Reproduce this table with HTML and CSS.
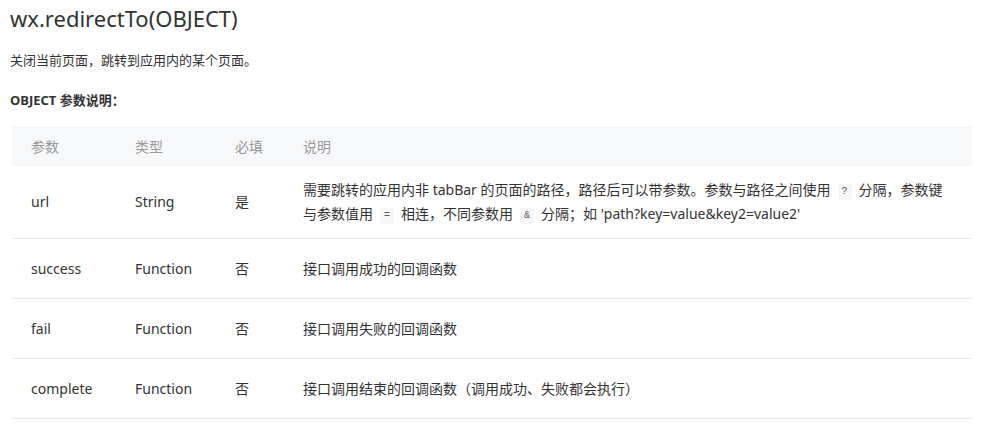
FILE: index.html
```html
<!DOCTYPE html>
<html lang="zh-CN">
<head>
    <meta charset="UTF-8">
    <title>wx.redirectTo</title>
    <link rel="stylesheet" href="styles.css">
</head>
<body>
    <h1 class="api-title">wx.redirectTo(OBJECT)</h1>
    <p class="api-desc">关闭当前页面，跳转到应用内的某个页面。</p>
    <p class="api-sub"><strong>OBJECT 参数说明：</strong></p>

    <table class="param-table">
        <thead>
            <tr>
                <th class="col-name">参数</th>
                <th class="col-type">类型</th>
                <th class="col-req">必填</th>
                <th>说明</th>
            </tr>
        </thead>
        <tbody>
            <tr>
                <td>url</td>
                <td>String</td>
                <td>是</td>
                <td>需要跳转的应用内非 tabBar 的页面的路径，路径后可以带参数。参数与路径之间使用<code>?</code>分隔，参数键<br>与参数值用<code>=</code>相连，不同参数用<code>&amp;</code>分隔；如 'path?key=value&amp;key2=value2'</td>
            </tr>
            <tr>
                <td>success</td>
                <td>Function</td>
                <td>否</td>
                <td>接口调用成功的回调函数</td>
            </tr>
            <tr>
                <td>fail</td>
                <td>Function</td>
                <td>否</td>
                <td>接口调用失败的回调函数</td>
            </tr>
            <tr>
                <td>complete</td>
                <td>Function</td>
                <td>否</td>
                <td>接口调用结束的回调函数（调用成功、失败都会执行）</td>
            </tr>
        </tbody>
    </table>
</body>
</html>
```

FILE: styles.css
```css
body {
    margin: 0;
    padding: 0 10px;
    background-color: #fff;
    color: #333;
    font-family: "Noto Sans", "Noto Sans CJK SC", sans-serif;
}

.api-title {
    margin: 0;
    padding-top: 3px;
    font-size: 22px;
    font-weight: normal;
    line-height: 30px;
    color: #333;
}

.api-desc {
    margin: 17px 0 0;
    font-size: 13px;
    line-height: 20px;
}

.api-sub {
    margin: 20px 0 0;
    font-size: 13px;
    line-height: 20px;
}

.param-table {
    margin: 16px 0 0 2px;
    width: 960px;
    border-collapse: collapse;
    font-size: 14px;
}

.param-table th {
    height: 40px;
    padding: 0 19px;
    background-color: #f7f8fa;
    color: #999;
    font-weight: normal;
    text-align: left;
}

.param-table td {
    height: 60px;
    padding: 12px 19px;
    line-height: 24px;
    border-bottom: 1px solid #e8e8e8;
    vertical-align: middle;
    box-sizing: border-box;
}

.param-table .col-name {
    width: 66px;
}

.param-table .col-type {
    width: 62px;
}

.param-table .col-req {
    width: 30px;
}

.param-table code {
    display: inline-block;
    margin: 0 7px;
    padding: 0 4px;
    line-height: 16px;
    vertical-align: 1px;
    background-color: #f7f7f7;
    font-family: "Liberation Mono", monospace;
    font-size: 10px;
    color: #555;
}
```
